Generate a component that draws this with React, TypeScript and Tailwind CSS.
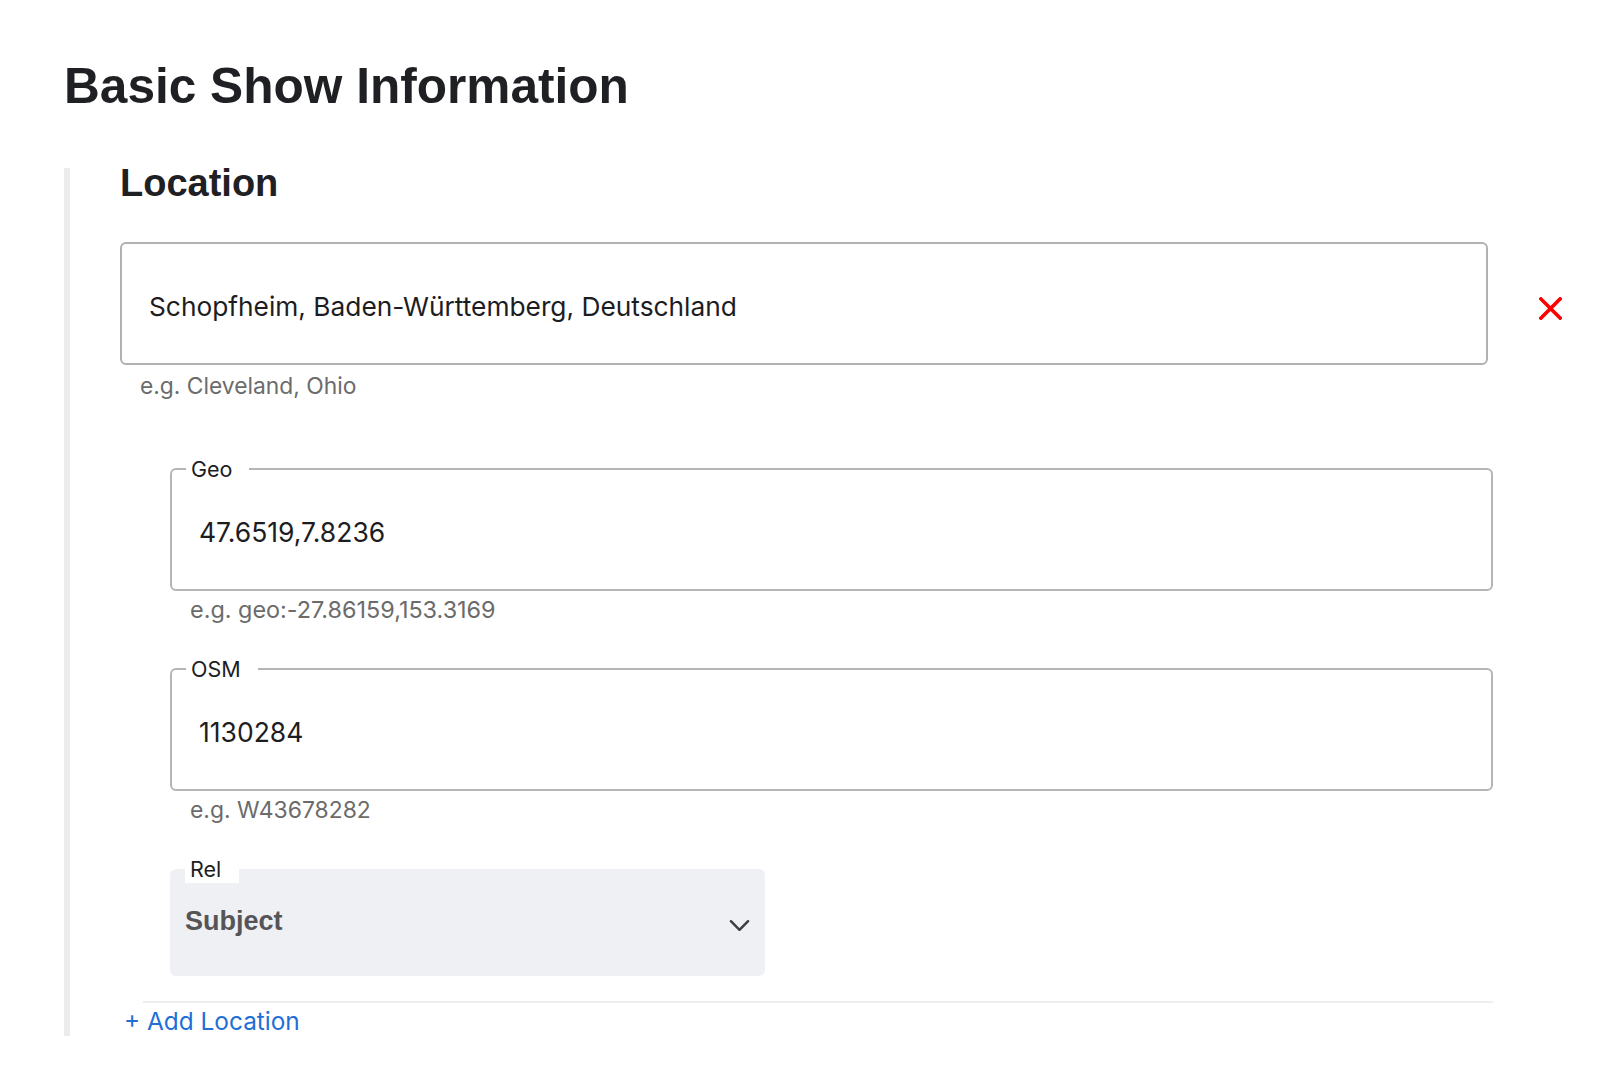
import React from "react";

const body = { fontFamily: "Inter, 'Liberation Sans', sans-serif" };
const head = { fontFamily: "'Liberation Sans', Arial, sans-serif" };

function XIcon() {
  return (
    <svg width="23" height="23" viewBox="0 0 24 24" className="block">
      <path d="M2 2 L22 22 M22 2 L2 22" stroke="#ff0000" strokeWidth="3.8" strokeLinecap="square" />
    </svg>
  );
}

function Chevron() {
  return (
    <svg width="21" height="13" viewBox="0 0 22 13" className="block">
      <path d="M2 2 L11 11 L20 2" stroke="#3f3f42" strokeWidth="2.6" fill="none" strokeLinecap="round" strokeLinejoin="round" />
    </svg>
  );
}

function FieldsetInput({ label, value, hint, hintSize }: { label: string; value: string; hint: string; hintSize: string }) {
  return (
    <div className="flex flex-col">
      <fieldset className="w-[1323px] border-2 border-[#b5b5b5] rounded-[6px]">
        <legend className="ml-[14px] pl-[5px] pr-[17px] text-[21.5px] leading-[28px] text-[#1d1d1f]">{label}</legend>
        <div className="h-[106px] flex items-center pl-[27px] pb-[7px] text-[26.5px] text-[#1d1d1f]">{value}</div>
      </fieldset>
      <div className={`pl-[20px] pt-[5px] leading-[28px] text-[#6b6b6b] ${hintSize}`}>{hint}</div>
    </div>
  );
}

export default function App() {
  return (
    <div className="min-h-[1089px] bg-white text-[#1d1d1f]" style={body}>
      <div className="pl-[64px] pt-[62px]">
        <h1 className="text-[49.6px] leading-[49px] font-bold text-[#1f2023]" style={head}>
          Basic Show Information
        </h1>
        <div className="mt-[57px] border-l-[6px] border-[#ececec] pl-[50px] w-[1510px]">
          <h2 className="text-[38px] leading-[30px] font-bold text-[#1f2023]" style={head}>
            Location
          </h2>
          <div className="mt-[44px] flex items-center">
            <div className="w-[1368px] h-[123px] border-2 border-[#b1b1b1] rounded-[6px] flex items-center pl-[27px] pt-[7px] text-[26.3px] text-[#1d1d1f]">
              Schopfheim, Baden-Württemberg, Deutschland
            </div>
            <div className="ml-[51px] pt-[10px]">
              <XIcon />
            </div>
          </div>
          <div className="pl-[20px] pt-[7px] text-[22.8px] leading-[28px] text-[#6b6b6b]">
            e.g. Cleveland, Ohio
          </div>

          <div className="ml-[50px] mt-[55px] flex flex-col gap-[31px]">
            <FieldsetInput label="Geo" value="47.6519,7.8236" hint="e.g. geo:-27.86159,153.3169" hintSize="text-[23.4px]" />
            <FieldsetInput label="OSM" value="1130284" hint="e.g. W43678282" hintSize="text-[22.9px]" />
          </div>

          <div className="ml-[50px] mt-[31px]">
            <fieldset className="w-[595px] bg-[#eff0f3] rounded-[6px]">
              <legend className="ml-[15px] pl-[5px] pr-[18px] bg-white text-[21.5px] leading-[28px] text-[#1d1d1f]">Rel</legend>
              <div className="h-[93px] flex items-center justify-between pr-[15px]">
                <span className="pl-[15px] pb-[16px] text-[27px] font-bold text-[#555558]" style={head}>
                  Subject
                </span>
                <span className="pb-[8px]">
                  <Chevron />
                </span>
              </div>
            </fieldset>
          </div>

          <div className="ml-[23px] mt-[25px] w-[1350px] border-t-2 border-[#eeeeee]" />
          <div className="ml-[4px] pt-[3px] text-[24.4px] leading-[30px] text-[#1f6fd6]">
            + Add Location
          </div>
        </div>
      </div>
    </div>
  );
}
